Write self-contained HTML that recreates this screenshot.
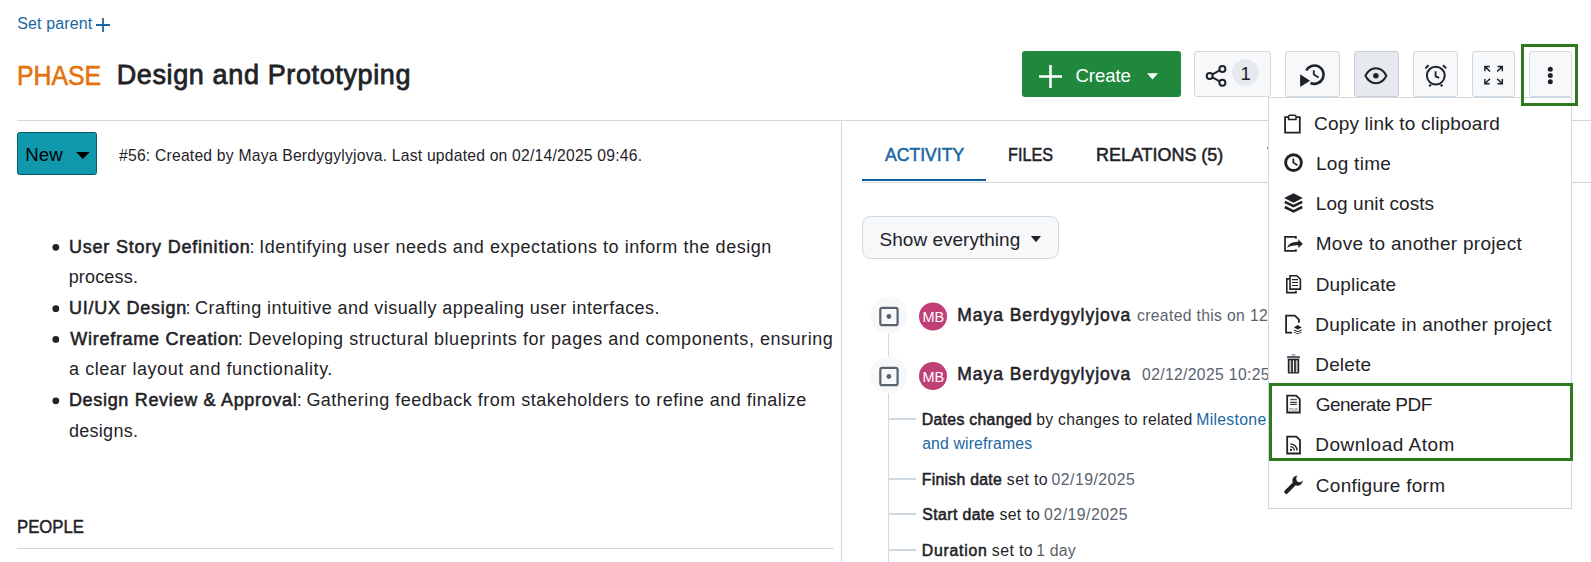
<!DOCTYPE html>
<html><head><meta charset="utf-8"><style>
html,body{margin:0;padding:0;width:1591px;height:562px;overflow:hidden;background:#fff;position:relative;}
.t{position:absolute;white-space:nowrap;font-family:"Liberation Sans",sans-serif;}
svg{position:absolute;left:0;top:0;}
</style></head><body>
<svg width="1591" height="562" viewBox="0 0 1591 562">
<!-- set parent plus -->
<path d="M96 25H110M103 18V32" stroke="#1a67a3" stroke-width="1.8" fill="none"/>
<!-- separators -->
<rect x="17" y="120" width="1574" height="1" fill="#d1d9e0"/>
<rect x="841" y="121" width="1" height="441" fill="#d1d9e0"/>
<rect x="862" y="182" width="729" height="1" fill="#d1d9e0"/>
<rect x="862" y="179" width="124" height="2" fill="#0f5b9c"/>
<rect x="17" y="548" width="817" height="1" fill="#d1d9e0"/>
<!-- create button -->
<rect x="1022" y="51" width="159" height="46" rx="3" fill="#1f883d"/>
<path d="M1039 76.5H1062M1050.5 65V88" stroke="#fff" stroke-width="2.6" fill="none"/>
<path d="M1147 73.3H1158L1152.5 79.4Z" fill="#fff"/>
<!-- icon buttons -->
<rect x="1194.5" y="51.5" width="76" height="45" rx="2.5" fill="#f6f8fa" stroke="#d1d9e0"/>
<rect x="1285.5" y="51.5" width="54" height="45" rx="2.5" fill="#f6f8fa" stroke="#d1d9e0"/>
<rect x="1354.5" y="51.5" width="44" height="45" rx="2.5" fill="#e6eaef" stroke="#c8cdd3"/>
<rect x="1413.5" y="51.5" width="44" height="45" rx="2.5" fill="#f6f8fa" stroke="#d1d9e0"/>
<rect x="1472.5" y="51.5" width="42" height="45" rx="2.5" fill="#f6f8fa" stroke="#d1d9e0"/>
<rect x="1529.5" y="51.5" width="42" height="45" rx="2.5" fill="#f6f8fa" stroke="#d1d9e0"/>
<!-- share icon -->
<g stroke="#1f2328" stroke-width="2" fill="none">
<circle cx="1222.4" cy="68.9" r="3"/><circle cx="1209.7" cy="75.9" r="3"/><circle cx="1222.4" cy="82.8" r="3"/>
<path d="M1212.4 74.4L1219.7 70.4M1212.4 77.4L1219.7 81.3"/>
</g>
<circle cx="1245.4" cy="72.5" r="13.3" fill="#e6eaef"/>
<!-- baseline icon -->
<g stroke="#1f2328" fill="none">
<path d="M1306.2 70.5A9.2 9.2 0 1 1 1310.5 83" stroke-width="2.6"/>
<path d="M1313.8 70.2V74.5L1318.6 77.4" stroke-width="1.8"/>
</g>
<path d="M1300.1 74.2V87L1310.1 80.8Z" fill="#1f2328"/>
<!-- eye -->
<path d="M1365.4 75.7C1368 70.6 1371.9 68.2 1375.9 68.2C1379.9 68.2 1383.8 70.6 1386.4 75.7C1383.8 80.8 1379.9 83.2 1375.9 83.2C1371.9 83.2 1368 80.8 1365.4 75.7Z" stroke="#1f2328" stroke-width="2" fill="none"/>
<circle cx="1375.9" cy="75.7" r="2.8" fill="#1f2328"/>
<!-- alarm -->
<g stroke="#1f2328" stroke-width="2" fill="none" stroke-linecap="butt">
<circle cx="1435.8" cy="75.6" r="8.9"/>
<path d="M1425.4 68.4L1428.6 65.2M1446.2 68.4L1443 65.2M1429.2 86.3L1431 84.5M1442.4 86.3L1440.6 84.5"/>
<path d="M1435.6 71.2V76.3L1439.2 77.8" stroke-width="1.8"/>
</g>
<!-- fullscreen -->
<g stroke="#1f2328" stroke-width="1.5" fill="none">
<path d="M1484.9 71.2V66.4H1489.7M1484.9 66.4L1490 71.5"/>
<path d="M1502.3 71.2V66.4H1497.5M1502.3 66.4L1497.2 71.5"/>
<path d="M1484.9 79V83.8H1489.7M1484.9 83.8L1490 78.7"/>
<path d="M1502.3 79V83.8H1497.5M1502.3 83.8L1497.2 78.7"/>
</g>
<!-- kebab -->
<g fill="#1f2328"><circle cx="1550.3" cy="69.3" r="2.5"/><circle cx="1550.3" cy="75.5" r="2.5"/><circle cx="1550.3" cy="81.7" r="2.5"/></g>
<!-- New status button -->
<rect x="17.5" y="132.5" width="79" height="42" rx="2" fill="#1098ad" stroke="#0a5a66"/>
<path d="M76 152H89.7L82.85 159Z" fill="#000"/>
<!-- bullets -->
<g fill="#1f2328">
<circle cx="55.8" cy="247.3" r="3.4"/><circle cx="55.8" cy="308.7" r="3.4"/><circle cx="55.8" cy="339.4" r="3.4"/><circle cx="55.8" cy="400.8" r="3.4"/>
</g>
<!-- show everything -->
<rect x="862.5" y="216.5" width="196" height="42" rx="8" fill="#f6f8fa" stroke="#d1d9e0"/>
<path d="M1030.9 236H1041L1035.95 242.3Z" fill="#1f2328"/>
<!-- timeline -->
<rect x="888" y="333" width="1" height="229" fill="#d1d9e0"/>
<g fill="#d1d9e0"><rect x="888" y="418" width="28" height="2"/><rect x="888" y="478" width="28" height="2"/><rect x="888" y="513" width="28" height="2"/><rect x="888" y="549" width="28" height="2"/></g>
<circle cx="889" cy="315" r="18.5" fill="#f6f8fa"/>
<circle cx="889" cy="375" r="18.5" fill="#f6f8fa"/>
<g stroke="#59636e" stroke-width="2.2" fill="none"><rect x="880.3" y="307.9" width="17.3" height="17.3" rx="2"/><rect x="880.3" y="367.9" width="17.3" height="17.3" rx="2"/></g>
<g fill="#59636e"><circle cx="888.9" cy="316.5" r="2.4"/><circle cx="888.9" cy="376.5" r="2.4"/></g>
<circle cx="933" cy="316.5" r="14" fill="#c13f77"/>
<circle cx="933" cy="376" r="14" fill="#c13f77"/>
<text x="933.2" y="322" font-family="Liberation Sans" font-size="14.5" fill="#fff" text-anchor="middle" letter-spacing="-0.2">MB</text>
<text x="933.2" y="381.5" font-family="Liberation Sans" font-size="14.5" fill="#fff" text-anchor="middle" letter-spacing="-0.2">MB</text>
<rect x="1267" y="147" width="1" height="2" fill="#888"/>
</svg>
<div class="t" style="left:17.27px;top:16px;font-size:16px;line-height:16px;letter-spacing:0.113px;color:#1a67a3;font-weight:400;">Set parent</div>
<div class="t" style="left:17.07px;top:63px;font-size:27px;line-height:27px;letter-spacing:0.000px;color:#e5720a;font-weight:400;-webkit-text-stroke:0.6px #e5720a;transform:scaleX(0.9188);transform-origin:0 0;">PHASE</div>
<div class="t" style="left:116.69px;top:62px;font-size:27px;line-height:27px;letter-spacing:0.627px;color:#1f2328;font-weight:400;-webkit-text-stroke:0.8px #1f2328;">Design and Prototyping</div>
<div class="t" style="left:1075.46px;top:67px;font-size:18.6px;line-height:18.6px;letter-spacing:-0.071px;color:#ffffff;font-weight:400;">Create</div>
<div class="t" style="left:1240.58px;top:65px;font-size:18.6px;line-height:18.6px;letter-spacing:0.000px;color:#1f2328;font-weight:400;">1</div>
<div class="t" style="left:25.17px;top:146px;font-size:18.6px;line-height:18.6px;letter-spacing:0.135px;color:#000000;font-weight:400;">New</div>
<div class="t" style="left:119.03px;top:148px;font-size:15.7px;line-height:15.7px;letter-spacing:0.214px;color:#1f2328;font-weight:400;">#56: Created by Maya Berdygylyjova. Last updated on 02/14/2025 09:46.</div>
<div class="t" style="left:68.99px;top:238px;font-size:18px;line-height:18px;letter-spacing:0.787px;color:#1f2328;font-weight:400;-webkit-text-stroke:0.55px #1f2328;">User Story Definition</div>
<div class="t" style="left:249.46px;top:238px;font-size:18px;line-height:18px;letter-spacing:0.000px;color:#1f2328;font-weight:400;">:</div>
<div class="t" style="left:259.24px;top:238px;font-size:18px;line-height:18px;letter-spacing:0.539px;color:#1f2328;font-weight:400;">Identifying user needs and expectations to inform the design</div>
<div class="t" style="left:68.64px;top:268px;font-size:18px;line-height:18px;letter-spacing:0.182px;color:#1f2328;font-weight:400;">process.</div>
<div class="t" style="left:68.99px;top:299px;font-size:18px;line-height:18px;letter-spacing:0.742px;color:#1f2328;font-weight:400;-webkit-text-stroke:0.55px #1f2328;">UI/UX Design</div>
<div class="t" style="left:185.46px;top:299px;font-size:18px;line-height:18px;letter-spacing:0.000px;color:#1f2328;font-weight:400;">:</div>
<div class="t" style="left:195.09px;top:299px;font-size:18px;line-height:18px;letter-spacing:0.442px;color:#1f2328;font-weight:400;">Crafting intuitive and visually appealing user interfaces.</div>
<div class="t" style="left:70.30px;top:330px;font-size:18px;line-height:18px;letter-spacing:0.720px;color:#1f2328;font-weight:400;-webkit-text-stroke:0.55px #1f2328;">Wireframe Creation</div>
<div class="t" style="left:237.76px;top:330px;font-size:18px;line-height:18px;letter-spacing:0.000px;color:#1f2328;font-weight:400;">:</div>
<div class="t" style="left:248.22px;top:330px;font-size:18px;line-height:18px;letter-spacing:0.533px;color:#1f2328;font-weight:400;">Developing structural blueprints for pages and components, ensuring</div>
<div class="t" style="left:69.04px;top:360px;font-size:18px;line-height:18px;letter-spacing:0.547px;color:#1f2328;font-weight:400;">a clear layout and functionality.</div>
<div class="t" style="left:68.90px;top:391px;font-size:18px;line-height:18px;letter-spacing:0.687px;color:#1f2328;font-weight:400;-webkit-text-stroke:0.55px #1f2328;">Design Review &amp; Approval</div>
<div class="t" style="left:296.66px;top:391px;font-size:18px;line-height:18px;letter-spacing:0.000px;color:#1f2328;font-weight:400;">:</div>
<div class="t" style="left:306.39px;top:391px;font-size:18px;line-height:18px;letter-spacing:0.492px;color:#1f2328;font-weight:400;">Gathering feedback from stakeholders to refine and finalize</div>
<div class="t" style="left:69.04px;top:422px;font-size:18px;line-height:18px;letter-spacing:0.265px;color:#1f2328;font-weight:400;">designs.</div>
<div class="t" style="left:16.83px;top:518px;font-size:18.7px;line-height:18.7px;letter-spacing:0.000px;color:#1f2328;font-weight:400;-webkit-text-stroke:0.5px #1f2328;transform:scaleX(0.8938);transform-origin:0 0;">PEOPLE</div>
<div class="t" style="left:884.95px;top:146px;font-size:18.6px;line-height:18.6px;letter-spacing:0.000px;color:#1a67a3;font-weight:400;-webkit-text-stroke:0.55px #1a67a3;transform:scaleX(0.9469);transform-origin:0 0;">ACTIVITY</div>
<div class="t" style="left:1007.75px;top:146px;font-size:18.6px;line-height:18.6px;letter-spacing:0.000px;color:#1f2328;font-weight:400;-webkit-text-stroke:0.55px #1f2328;transform:scaleX(0.8709);transform-origin:0 0;">FILES</div>
<div class="t" style="left:1096.11px;top:146px;font-size:18.6px;line-height:18.6px;letter-spacing:0.000px;color:#1f2328;font-weight:400;-webkit-text-stroke:0.55px #1f2328;transform:scaleX(0.9650);transform-origin:0 0;">RELATIONS (5)</div>
<div class="t" style="left:879.54px;top:230px;font-size:19px;line-height:19px;letter-spacing:0.016px;color:#1f2328;font-weight:400;">Show everything</div>
<div class="t" style="left:957.24px;top:307px;font-size:17.5px;line-height:17.5px;letter-spacing:0.958px;color:#1f2328;font-weight:400;-webkit-text-stroke:0.55px #1f2328;">Maya Berdygylyjova</div>
<div class="t" style="left:1137.03px;top:308px;font-size:15.7px;line-height:15.7px;letter-spacing:0.350px;color:#59636e;font-weight:400;">created this on 12/12/2024 10:25 AM</div>
<div class="t" style="left:957.24px;top:366px;font-size:17.5px;line-height:17.5px;letter-spacing:0.958px;color:#1f2328;font-weight:400;-webkit-text-stroke:0.55px #1f2328;">Maya Berdygylyjova</div>
<div class="t" style="left:1142.09px;top:367px;font-size:15.7px;line-height:15.7px;letter-spacing:0.350px;color:#59636e;font-weight:400;">02/12/2025 10:25 AM</div>
<div class="t" style="left:921.78px;top:412px;font-size:15.8px;line-height:15.8px;letter-spacing:0.314px;color:#1f2328;font-weight:400;-webkit-text-stroke:0.55px #1f2328;">Dates changed</div>
<div class="t" style="left:1036.28px;top:412px;font-size:15.8px;line-height:15.8px;letter-spacing:0.248px;color:#1f2328;font-weight:400;">by changes to related</div>
<div class="t" style="left:1196.20px;top:412px;font-size:15.8px;line-height:15.8px;letter-spacing:0.300px;color:#1a67a3;font-weight:400;">Milestone Mockups</div>
<div class="t" style="left:922.13px;top:436px;font-size:15.8px;line-height:15.8px;letter-spacing:0.149px;color:#1a67a3;font-weight:400;">and wireframes</div>
<div class="t" style="left:921.78px;top:472px;font-size:15.8px;line-height:15.8px;letter-spacing:0.265px;color:#1f2328;font-weight:400;-webkit-text-stroke:0.55px #1f2328;">Finish date</div>
<div class="t" style="left:1006.86px;top:472px;font-size:15.8px;line-height:15.8px;letter-spacing:0.432px;color:#1f2328;font-weight:400;">set to</div>
<div class="t" style="left:1051.58px;top:472px;font-size:15.8px;line-height:15.8px;letter-spacing:0.456px;color:#59636e;font-weight:400;">02/19/2025</div>
<div class="t" style="left:922.36px;top:507px;font-size:15.8px;line-height:15.8px;letter-spacing:0.395px;color:#1f2328;font-weight:400;-webkit-text-stroke:0.55px #1f2328;">Start date</div>
<div class="t" style="left:999.46px;top:507px;font-size:15.8px;line-height:15.8px;letter-spacing:0.352px;color:#1f2328;font-weight:400;">set to</div>
<div class="t" style="left:1044.08px;top:507px;font-size:15.8px;line-height:15.8px;letter-spacing:0.489px;color:#59636e;font-weight:400;">02/19/2025</div>
<div class="t" style="left:921.78px;top:543px;font-size:15.8px;line-height:15.8px;letter-spacing:0.763px;color:#1f2328;font-weight:400;-webkit-text-stroke:0.55px #1f2328;">Duration</div>
<div class="t" style="left:991.86px;top:543px;font-size:15.8px;line-height:15.8px;letter-spacing:0.432px;color:#1f2328;font-weight:400;">set to</div>
<div class="t" style="left:1036.30px;top:543px;font-size:15.8px;line-height:15.8px;letter-spacing:0.146px;color:#59636e;font-weight:400;">1 day</div>
<svg width="1591" height="562" viewBox="0 0 1591 562">
<rect x="1268.5" y="97.5" width="303" height="411" fill="#fff" stroke="#d1d9e0"/>
<!-- clipboard -->
<g stroke="#1f2328" stroke-width="1.8" fill="none">
<path d="M1288.4 117.2H1285.1V132.6H1299.8V117.2H1296.2"/>
<path d="M1288.6 119.4V116.6Q1288.6 115.3 1290 115.3H1294.6Q1296 115.3 1296 116.6V119.4Z" stroke-width="1.5"/>
</g>
<!-- clock -->
<g stroke="#1f2328" fill="none"><circle cx="1293.5" cy="162.6" r="7.9" stroke-width="2.9"/><path d="M1293.3 158.6V162.6L1297.4 165.2" stroke-width="1.7"/></g>
<!-- layers -->
<path d="M1284.1 198L1293.5 193.2L1302.8 198L1293.5 202.8Z" fill="#1f2328"/>
<path d="M1284.8 201.8L1293.5 206.1L1302.2 201.8M1284.8 207L1293.5 211.3L1302.2 207" stroke="#1f2328" stroke-width="2.6" fill="none"/>
<!-- move -->
<g fill="none" stroke="#1f2328" stroke-width="1.7">
<path d="M1295.9 238.8V236.9H1285V250.9H1295.9V249.2"/>
</g>
<path d="M1287 248Q1289 241.5 1298.3 241.7V239.2L1302.8 243.9L1298.3 248V245.3Q1291 245 1287 248Z" fill="#1f2328"/>
<!-- duplicate -->
<g fill="none" stroke="#1f2328" stroke-width="1.6">
<path d="M1290 275.7H1296.8L1300.4 279.3V289.1H1290Z"/>
<path d="M1289.2 278.9H1286.8V292.6H1296V290.8"/>
<path d="M1292 279.6H1298M1292 282.5H1298M1292 285.5H1298" stroke-width="1.2"/>
</g>
<!-- duplicate in another project -->
<g fill="none" stroke="#1f2328" stroke-width="1.8">
<path d="M1292 332.7H1286.1V315.6H1294.9L1298.9 319.6V322.8"/>
</g>
<g fill="#1f2328">
<path d="M1293.8 327.4L1297.8 325L1301.8 327.4L1297.8 329.6Z"/>
<path d="M1294 329.4L1297.8 331.3L1301.6 329.4L1301.8 330.4L1297.8 332.3L1293.8 330.4Z"/>
<path d="M1294 331.7L1297.8 333.6L1301.6 331.7L1301.8 332.4L1297.8 334.2L1293.8 332.4Z"/>
</g>
<!-- trash -->
<g fill="#1f2328">
<rect x="1287.1" y="356" width="12.8" height="2.5" fill="#5a6068"/>
<rect x="1291.8" y="354.1" width="3.4" height="1.5" fill="#8a9098"/>
<path d="M1287.8 359H1299.2V372.6Q1299.2 373.6 1298.2 373.6H1288.8Q1287.8 373.6 1287.8 372.6Z"/>
</g>
<g fill="#c8c8c8"><rect x="1289.4" y="360.3" width="1.8" height="12"/><rect x="1295.8" y="360.3" width="1.8" height="12"/></g>
<rect x="1292.9" y="360.3" width="1.2" height="12" fill="#fff"/>
<!-- pdf -->
<g fill="none" stroke="#1f2328" stroke-width="1.8">
<path d="M1287.2 395.6H1296.2L1299.8 399.2V412.5H1287.2Z"/>
</g>
<g fill="#1f2328"><rect x="1290.2" y="398.8" width="6.6" height="1.4" fill="#55595e"/><rect x="1290.2" y="401.8" width="6.6" height="1.1"/><rect x="1290.2" y="403.8" width="6.6" height="1.1"/></g>
<text x="1293.5" y="410.6" font-family="Liberation Sans" font-size="4.2" fill="#444" text-anchor="middle">PDF</text>
<!-- atom -->
<g fill="none" stroke="#1f2328" stroke-width="1.8">
<path d="M1287.2 436.6H1296.4L1300 440.2V453.5H1287.2Z"/>
<path d="M1290.3 443.9A6.7 6.7 0 0 1 1297 450.6" stroke-width="1.4"/>
<path d="M1290.3 446.6A4 4 0 0 1 1294.3 450.6" stroke-width="1.4"/>
</g>
<circle cx="1291" cy="449.9" r="1.1" fill="#1f2328"/>
<!-- wrench -->
<path d="M1297.5 475.5Q1293.5 476 1292.5 479.3Q1292 481.2 1292.8 482.5L1284.6 490.7Q1283.6 492 1284.9 493.3Q1286.2 494.5 1287.5 493.4L1295.7 485.2Q1297 486 1299 485.5Q1302.3 484.4 1302.8 480.6L1300.4 482.3Q1298.2 482.5 1297 481.2Q1296 479.8 1296.3 477.8Z" fill="#1f2328"/>
<!-- green highlights -->
<rect x="1522.5" y="45.5" width="54" height="59" fill="none" stroke="#2f7a1f" stroke-width="3"/>
<rect x="1270.5" y="384.5" width="301" height="75" fill="none" stroke="#2f7a1f" stroke-width="3"/>
</svg>

<div class="t" style="left:1314.04px;top:114px;font-size:19px;line-height:19px;letter-spacing:0.192px;color:#1f2328;font-weight:400;">Copy link to clipboard</div>
<div class="t" style="left:1315.94px;top:154px;font-size:19px;line-height:19px;letter-spacing:0.290px;color:#1f2328;font-weight:400;">Log time</div>
<div class="t" style="left:1315.74px;top:194px;font-size:19px;line-height:19px;letter-spacing:0.085px;color:#1f2328;font-weight:400;">Log unit costs</div>
<div class="t" style="left:1315.74px;top:234px;font-size:19px;line-height:19px;letter-spacing:0.290px;color:#1f2328;font-weight:400;">Move to another project</div>
<div class="t" style="left:1315.74px;top:275px;font-size:19px;line-height:19px;letter-spacing:0.149px;color:#1f2328;font-weight:400;">Duplicate</div>
<div class="t" style="left:1315.24px;top:315px;font-size:19px;line-height:19px;letter-spacing:0.185px;color:#1f2328;font-weight:400;">Duplicate in another project</div>
<div class="t" style="left:1315.24px;top:355px;font-size:19px;line-height:19px;letter-spacing:0.176px;color:#1f2328;font-weight:400;">Delete</div>
<div class="t" style="left:1315.84px;top:395px;font-size:19px;line-height:19px;letter-spacing:-0.553px;color:#1f2328;font-weight:400;">Generate PDF</div>
<div class="t" style="left:1315.24px;top:435px;font-size:19px;line-height:19px;letter-spacing:0.511px;color:#1f2328;font-weight:400;">Download Atom</div>
<div class="t" style="left:1315.84px;top:476px;font-size:19px;line-height:19px;letter-spacing:0.274px;color:#1f2328;font-weight:400;">Configure form</div>
</body></html>
